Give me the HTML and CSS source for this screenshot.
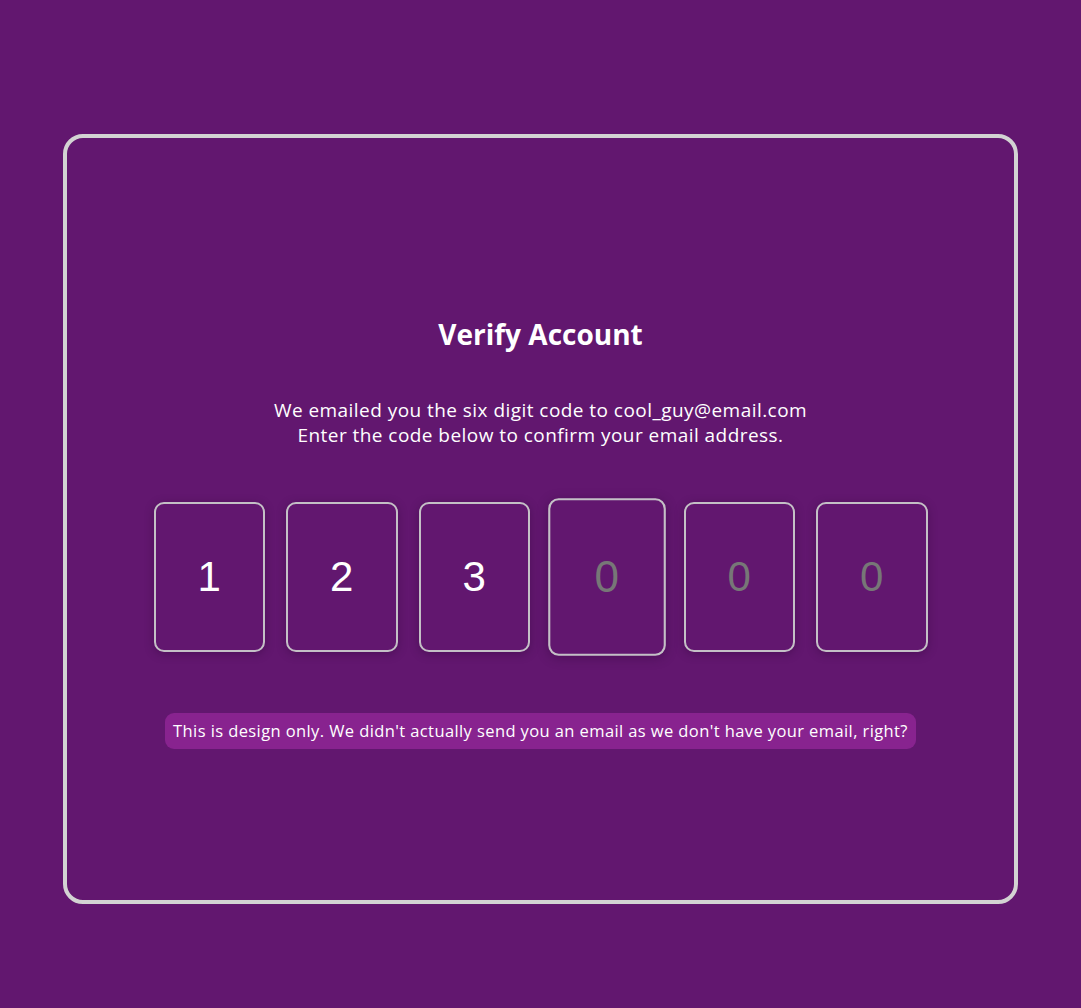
FILE: index.html
```html
<!DOCTYPE html>
<html lang="en">
<head>
<meta charset="UTF-8">
<title>Verify Account</title>
<link rel="stylesheet" href="styles.css">
</head>
<body>
<div class="container">
  <h2 class="title">Verify Account</h2>
  <p class="lead">We emailed you the six digit code to cool_guy@email.com<br>Enter the code below to confirm your email address.</p>
  <div class="code-container">
    <div class="code filled">1</div>
    <div class="code filled">2</div>
    <div class="code filled">3</div>
    <div class="code empty focused">0</div>
    <div class="code empty">0</div>
    <div class="code empty">0</div>
  </div>
  <small class="info">This is design only. We didn't actually send you an email as we don't have your email, right?</small>
</div>
</body>
</html>
```
FILE: styles.css
```css
* { box-sizing: border-box; }
html, body { margin: 0; padding: 0; }
body {
  background: #62176f;
  font-family: "Open Sans", "Noto Sans", sans-serif;
  color: #fff;
  height: 1008px;
  overflow: hidden;
}
.container {
  width: 955px;
  height: 770px;
  margin: 134px auto 0;
  border: 4px solid #d3d3d3;
  border-radius: 20px;
  padding-top: 179px;
  display: flex;
  flex-direction: column;
  align-items: center;
  text-align: center;
}
.title {
  margin: 0;
  font-size: 28px;
  line-height: 34px;
  font-weight: 700;
}
.lead {
  margin: 47px 0 0;
  font-size: 19px;
  letter-spacing: 0.45px;
  line-height: 25px;
}
.code-container {
  display: flex;
  margin-top: 54px;
}
.code {
  width: 111.5px;
  height: 150px;
  margin: 0 10.5px;
  border: 2px solid #c4c0c6;
  border-radius: 10px;
  display: flex;
  align-items: center;
  justify-content: center;
  font-family: "Liberation Sans", Arial, sans-serif;
  font-size: 42px;
  box-shadow: 0 2px 10px rgba(40, 0, 50, 0.35);
}
.code.filled { color: #fff; }
.code.empty { color: #777; }
.code.focused { transform: scale(1.05); }
.info {
  margin-top: 61px;
  background: #88238f;
  border-radius: 9px;
  padding: 8px 8px;
  font-size: 16.5px;
  letter-spacing: 0.4px;
  line-height: 20px;
}
```
